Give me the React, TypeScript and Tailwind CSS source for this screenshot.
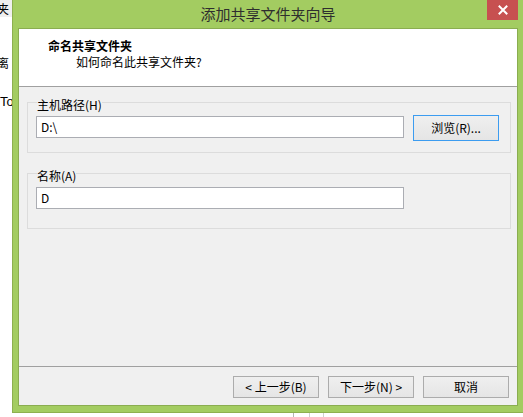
import React from "react";

function WizardButton({
  children,
  primary = false,
  className = "",
}: {
  children: React.ReactNode;
  primary?: boolean;
  className?: string;
}) {
  return (
    <button
      type="button"
      className={
        "flex items-center justify-center border bg-gradient-to-b from-[#efefef] to-[#e5e5e5] text-[12px] leading-none text-[#000] " +
        (primary ? "border-[#3c9cf0] " : "border-[#acacac] ") +
        className
      }
    >
      {children}
    </button>
  );
}

function TextField({ value }: { value: string }) {
  return (
    <div className="flex h-[22px] w-[368px] items-center border border-[#abadb3] bg-white pl-[4px] text-[12px] leading-none text-black">
      {value}
    </div>
  );
}

export default function App() {
  return (
    <div className="h-[417px] w-[523px] overflow-hidden bg-white font-['Noto_Sans_CJK_SC','Noto_Sans',sans-serif] text-black">
      <div className="flex h-[413px]">
        {/* edge of the window behind */}
        <div className="flex w-[12px] shrink-0 flex-col overflow-hidden text-[12px] leading-none">
          <div className="flex h-[17px] items-center bg-[#efefef]">
            <span className="ml-[-3px] whitespace-nowrap">夹</span>
          </div>
          <div className="mt-[38px] flex h-[16px] items-center">
            <span className="ml-[-3px] whitespace-nowrap">离</span>
          </div>
          <div className="mt-[23px] flex h-[14px] items-center">
            <span className="whitespace-nowrap font-['Liberation_Sans',sans-serif] text-[13px]">To</span>
          </div>
        </div>

        {/* wizard window */}
        <div className="flex w-[512px] shrink-0 flex-col border-x border-b border-[#8db04f] bg-[#a3cc61] px-[5px] pb-[6px]">
          <div className="relative flex h-[28px] shrink-0 items-center justify-center">
            <span className="pb-[1px] text-[15px] leading-none text-[#2e2e2e]">添加共享文件夹向导</span>
            <div className="absolute right-0 top-0 flex h-[20px] w-[31px] items-center justify-center bg-[#c75050]">
              <svg width="10" height="10" viewBox="0 0 10 10">
                <path d="M1.5 1.5 L8.5 8.5 M8.5 1.5 L1.5 8.5" stroke="#fff" strokeWidth="2" strokeLinecap="square" />
              </svg>
            </div>
          </div>

          <div className="flex flex-1 flex-col border border-[#8aad50] bg-[#f0f0f0]">
            {/* header */}
            <div className="h-[58px] shrink-0 border-b border-[#a0a0a0] bg-white pl-[29px] pt-[9px] text-[12px] leading-[16px]">
              <div className="font-bold">命名共享文件夹</div>
              <div className="pl-[28px]">如何命名此共享文件夹?</div>
            </div>

            {/* body */}
            <div className="flex flex-1 flex-col gap-[12px] pl-[8px] pr-[6px] pt-[6px]">
              <fieldset className="border border-[#dcdcdc] px-[8px] pb-[11px] pt-[4px]">
                <legend className="ml-[1px] px-0 pt-[6px] text-[12px] leading-[12px]">主机路径(H)</legend>
                <div className="flex items-start gap-[9px]">
                  <div className="mt-[1px]">
                    <TextField value="D:\" />
                  </div>
                  <WizardButton primary className="h-[26px] w-[86px]">
                    浏览(R)...
                  </WizardButton>
                </div>
              </fieldset>

              <fieldset className="border border-[#dcdcdc] px-[8px] pb-[19px] pt-[5px]">
                <legend className="ml-[1px] px-0 pt-[5px] text-[12px] leading-[12px]">名称(A)</legend>
                <TextField value="D" />
              </fieldset>
            </div>

            {/* footer */}
            <div className="flex shrink-0 justify-end gap-[9px] border-t border-[#a0a0a0] pb-[7px] pr-[8px] pt-[9px]">
              <WizardButton className="h-[22px] w-[86px]">&lt; 上一步(B)</WizardButton>
              <WizardButton className="h-[22px] w-[86px]">下一步(N) &gt;</WizardButton>
              <WizardButton className="h-[22px] w-[86px]">取消</WizardButton>
            </div>
          </div>
        </div>
      </div>

      {/* strip of the window below */}
      <div className="flex h-[4px]">
        <div className="w-[293px]" />
        <div className="w-[1px] bg-[#b5b5b5]" />
        <div className="w-[15px]" />
        <div className="w-[1px] bg-[#d0d0d0]" />
        <div className="w-[13px]" />
        <div className="w-[1px] bg-[#d0d0d0]" />
      </div>
    </div>
  );
}
